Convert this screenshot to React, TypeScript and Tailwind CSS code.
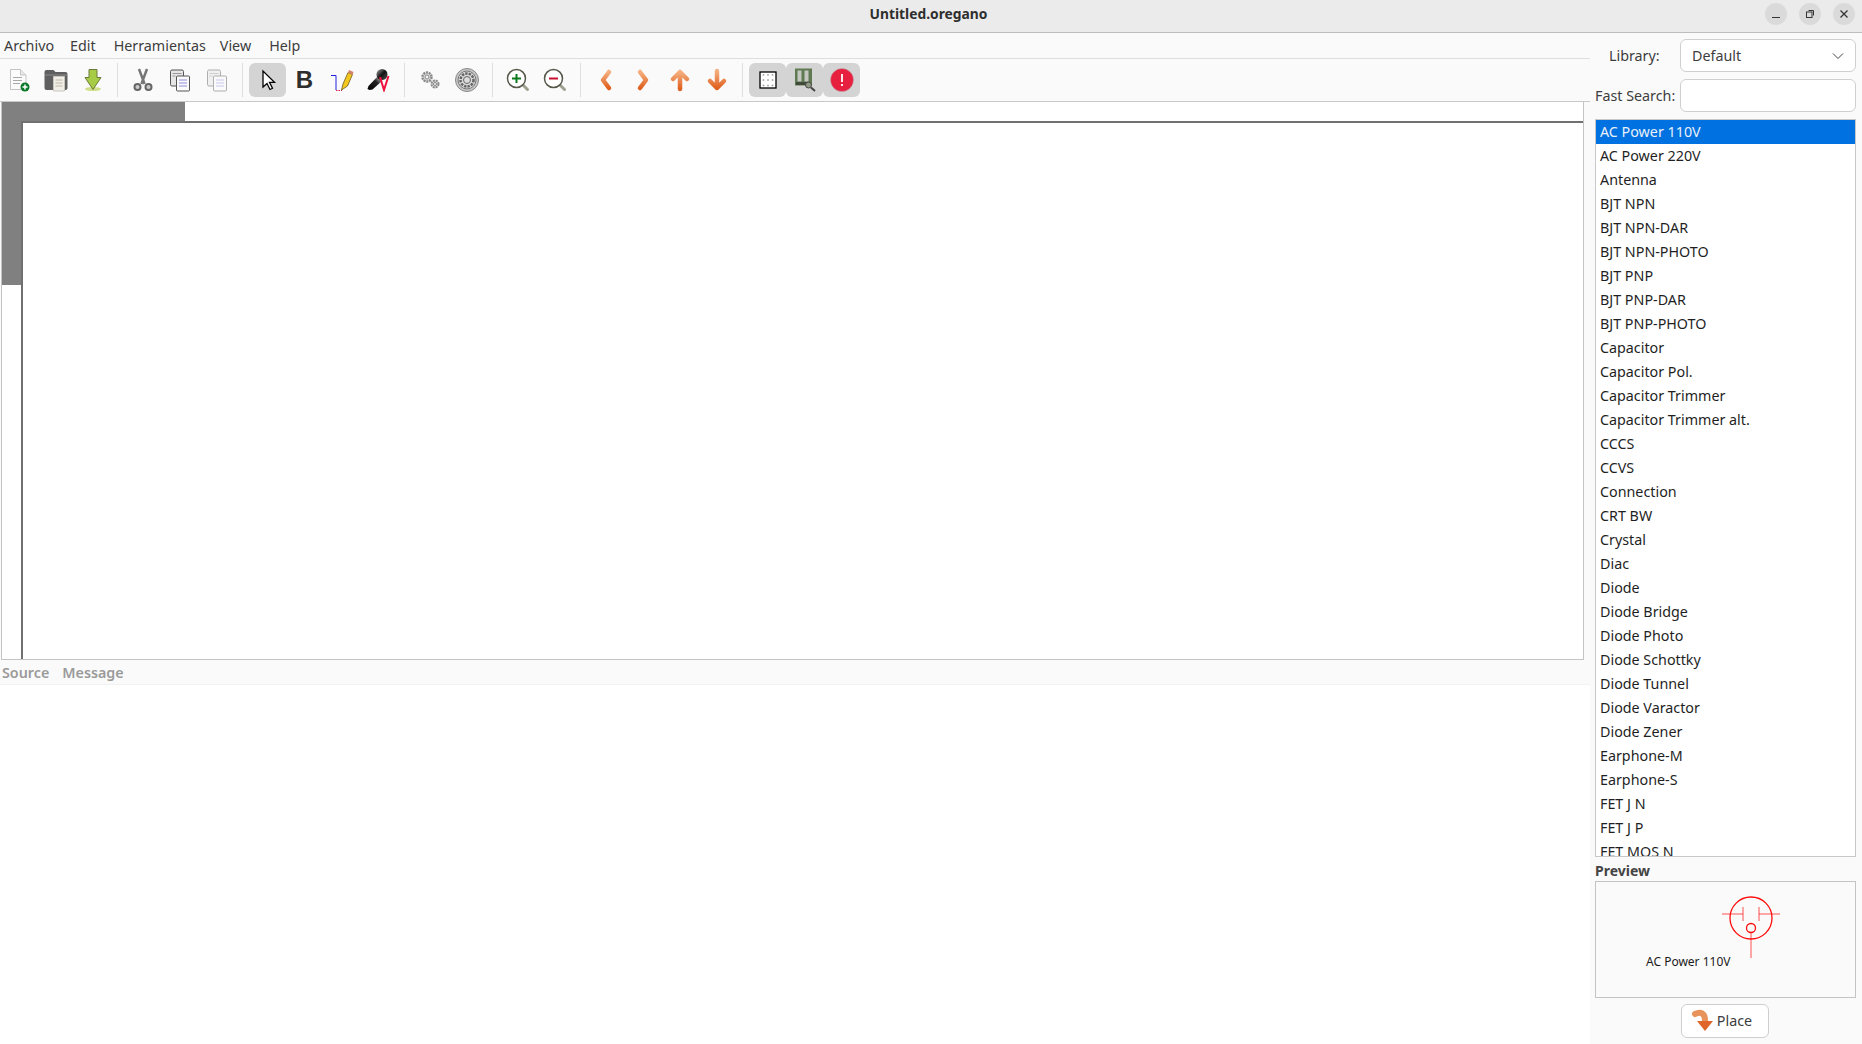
import { ReactNode } from 'react';

const parts = [
  'AC Power 110V', 'AC Power 220V', 'Antenna', 'BJT NPN', 'BJT NPN-DAR', 'BJT NPN-PHOTO', 'BJT PNP', 'BJT PNP-DAR',
  'BJT PNP-PHOTO', 'Capacitor', 'Capacitor Pol.', 'Capacitor Trimmer', 'Capacitor Trimmer alt.', 'CCCS', 'CCVS',
  'Connection', 'CRT BW', 'Crystal', 'Diac', 'Diode', 'Diode Bridge', 'Diode Photo', 'Diode Schottky', 'Diode Tunnel',
  'Diode Varactor', 'Diode Zener', 'Earphone-M', 'Earphone-S', 'FET J N', 'FET J P', 'FET MOS N',
];

function Svg({ children }: { children: ReactNode }) {
  return <svg width="24" height="24" viewBox="0 0 24 24" fill="none">{children}</svg>;
}

function Tool({ active, children }: { active?: boolean; children: ReactNode }) {
  return (
    <div className={`w-[37px] h-[34px] flex items-center justify-center rounded-md ${active ? 'bg-[#d4d4d4]' : ''}`}>
      {children}
    </div>
  );
}

function Sep({ narrow }: { narrow?: boolean }) {
  return (
    <div className={`h-[34px] flex justify-center ${narrow ? 'w-[13px]' : 'w-[14px]'}`}>
      <div className="w-px h-full bg-[#dedede]" />
    </div>
  );
}

const NewIcon = () => (
  <Svg>
    <path d="M3.5 1.5h10l5.500 5.500v14.500h-15.500z" fill="#fbfbfb" stroke="#c4c4c4" />
    <path d="M13.500 1.500v5.500h5.500" fill="#e8e8e8" stroke="#c4c4c4" />
    <path d="M6 9.500h9M6 12.500h9M6 15.500h7" stroke="#a8a8a8" />
    <circle cx="18" cy="19" r="4.500" fill="#0b7a2b" />
    <path d="M15.500 19h5M18 16.500v5" stroke="#fff" strokeWidth="1.500" />
  </Svg>
);

const OpenIcon = () => (
  <Svg>
    <path d="M0.500 4a2 2 0 0 1 2-2h7l2 2h10a2 2 0 0 1 2 2v14a2 2 0 0 1-2 2h-19a2 2 0 0 1-2-2z" fill="#5f5f5f" />
    <path d="M1 7h22" stroke="#8a8a8a" />
    <path d="M9.500 8.500h11v14.500h-11z" fill="#f0eee6" stroke="#c8c6bc" />
    <path d="M11.500 12h7M11.500 15h7M11.500 18h7" stroke="#bdb9a8" />
  </Svg>
);

const SaveIcon = () => (
  <Svg>
    <ellipse cx="12" cy="21" rx="8" ry="2" fill="#cfe08a" />
    <path d="M8 1.500h8v8h4l-8 12-8-12h4z" fill="#a6cc45" stroke="#6b7a3a" />
  </Svg>
);

const CutIcon = () => (
  <Svg>
    <path d="M8 1l4.500 12 1 3M16 1l-4.500 12-1 3" stroke="#777" strokeWidth="2.500" />
    <circle cx="6.500" cy="19" r="3" stroke="#666" strokeWidth="2" fill="#ccc" />
    <circle cx="17.500" cy="19" r="3" stroke="#666" strokeWidth="2" fill="#ccc" />
  </Svg>
);

const CopyIcon = ({ faded }: { faded?: boolean }) => (
  <g opacity={faded ? 0.45 : 1}>
    <rect x="2.500" y="2" width="13" height="16" rx="1.500" fill="#e6e6e6" stroke="#555" />
    <rect x="8.500" y="8" width="13" height="15" rx="1" fill="#fafafa" stroke="#555" />
    <path d="M4.500 5.500h9M4.500 8h3" stroke="#999" />
    <path d="M11 12h8M11 15h8M11 18h8" stroke="#8c8cdc" />
  </g>
);

const PointerIcon = () => (
  <Svg>
    <path d="M7 3v16l4-3.500 3 6 2.500-1.200-3-6h5z" fill="#fff" stroke="#000" strokeWidth="1.300" />
  </Svg>
);

const WireIcon = () => (
  <Svg>
    <path d="M1 7.500h5v14.500" stroke="#2020e0" strokeWidth="1" />
    <path d="M6 22.500h6" stroke="#e02050" strokeWidth="1" strokeDasharray="1.500 1" />
    <path d="M11.500 22l1.500-6 5-11.500 4.500 2-5 11.500z" fill="#f2c81e" stroke="#6d5a20" strokeWidth="0.800" />
    <path d="M18 4.500l1-2.500 4.500 2-1 3z" fill="#d2826a" />
  </Svg>
);

const ProbeIcon = () => (
  <Svg>
    <defs>
      <linearGradient id="probe" x1="0" y1="0" x2="1" y2="1">
        <stop offset="0" stopColor="#aaa" />
        <stop offset="0.500" stopColor="#111" />
        <stop offset="1" stopColor="#555" />
      </linearGradient>
      <linearGradient id="handle" x1="0" y1="1" x2="1" y2="0">
        <stop offset="0" stopColor="#000" />
        <stop offset="0.600" stopColor="#222" />
        <stop offset="1" stopColor="#ddd" />
      </linearGradient>
    </defs>
    <path d="M0.500 21l1-3 9-9.500 4.500 4.500-9.500 8.500-3 .5z" fill="url(#handle)" />
    <circle cx="15" cy="6.500" r="5.500" fill="url(#probe)" />
    <path d="M13 9l4 13 4.500-14" stroke="#f0103c" strokeWidth="2" />
  </Svg>
);

const GearsIcon = () => (
  <Svg>
    <circle cx="9" cy="9" r="4.500" fill="#ddd" stroke="#8a8a8a" strokeWidth="2.500" strokeDasharray="2 0.800" />
    <circle cx="9" cy="9" r="2" fill="#f4f4f4" stroke="#888" />
    <circle cx="17" cy="16" r="3.500" fill="#ddd" stroke="#8a8a8a" strokeWidth="2" strokeDasharray="2 0.800" />
    <circle cx="17" cy="16" r="1.500" fill="#f4f4f4" stroke="#888" />
  </Svg>
);

const SettingsIcon = () => (
  <Svg>
    <circle cx="12" cy="12" r="11.500" fill="#c8c8c8" stroke="#888" />
    <circle cx="12" cy="12" r="9" fill="#dcdcdc" stroke="#777" />
    <circle cx="12" cy="12" r="6.500" stroke="#666" strokeWidth="2.500" strokeDasharray="2.500 1" />
    <circle cx="12" cy="12" r="3.500" fill="#dcdcdc" stroke="#666" />
  </Svg>
);

const ZoomIcon = ({ plus }: { plus?: boolean }) => (
  <Svg>
    <path d="M16 16l5.500 5.500" stroke="#a0a090" strokeWidth="3" strokeLinecap="round" />
    <circle cx="10.500" cy="10.500" r="9" fill="#fff" stroke="#55584a" strokeWidth="1.500" />
    <path d="M6 10.500h9" stroke={plus ? '#0b7a1e' : '#c8102e'} strokeWidth="2" />
    {plus && <path d="M10.500 6v9" stroke="#0b7a1e" strokeWidth="2" />}
  </Svg>
);

const ArrowIcon = ({ d, grad }: { d: string; grad: string }) => (
  <Svg>
    <defs>
      <linearGradient id={grad} x1="0" y1="0" x2="0" y2="1" gradientUnits="objectBoundingBox">
        <stop offset="0" stopColor="#f4b080" />
        <stop offset="1" stopColor="#e0601f" />
      </linearGradient>
    </defs>
    <path d={d} stroke={`url(#${grad})`} strokeWidth="4.500" strokeLinecap="round" strokeLinejoin="round" />
  </Svg>
);

const GridIcon = () => (
  <Svg>
    <rect x="4" y="4" width="16" height="16" fill="#fff" stroke="#000" strokeWidth="1.300" />
    <path d="M7.500 6v1.500M7.500 11v2M7.500 16.500v2M12 6v1.500M12 11v2M12 16.500v2M16.500 6v1.500M16.500 11v2M16.500 16.500v2M6.500 7h2M6.500 12h2M6.500 17.500h2M11 7h2M11 12h2M11 17.500h2M15.500 7h2M15.500 12h2M15.500 17.500h2" stroke="#a0a0a0" strokeWidth="0.800" />
  </Svg>
);

const BoardIcon = () => (
  <Svg>
    <rect x="2" y="0.500" width="17" height="17" fill="#5f7a52" />
    <rect x="4.500" y="2.500" width="4" height="11" fill="#c4c8c0" />
    <rect x="11.500" y="2.500" width="4" height="11" fill="#c4c8c0" />
    <path d="M3 17h13v-3H3z" fill="#3f4a3a" />
    <circle cx="15.500" cy="17" r="3" fill="#8f9a85" stroke="#444" />
    <path d="M18 19.500l4 3.500" stroke="#444" strokeWidth="2" />
  </Svg>
);

const AlertIcon = () => (
  <Svg>
    <circle cx="12" cy="12" r="11.500" fill="#e8203f" stroke="#b8b8b8" strokeWidth="0.500" />
    <path d="M12 6v8" stroke="#fff" strokeWidth="1.800" />
    <path d="M12 16v2" stroke="#fff" strokeWidth="1.800" />
  </Svg>
);

export default function App() {
  return (
    <div className="w-[1862px] h-[1044px] flex flex-col overflow-hidden bg-[#fafafa] font-['Noto_Sans',sans-serif] text-[14.3px] text-[#3d3d3d]">
      <header className="relative h-[33px] shrink-0 flex items-center justify-center pb-[4px] pr-[5px] bg-[#ebebeb] border-b border-[#bdbdbd]">
        <span className="font-bold text-[13.8px] text-[#2e2e2e]">Untitled.oregano</span>
        <div className="absolute right-[7px] top-[3px] flex gap-[12px]">
          <div className="w-[22px] h-[22px] rounded-full bg-[#dadada] flex items-center justify-center">
            <div className="w-[8px] h-px mt-[6px] bg-[#333]" />
          </div>
          <div className="w-[22px] h-[22px] rounded-full bg-[#dadada] flex items-center justify-center">
            <svg width="10" height="10" viewBox="0 0 10 10" fill="none" stroke="#333">
              <rect x="1.500" y="3" width="5.500" height="5.500" />
              <path d="M3.500 1.500h5v5" />
            </svg>
          </div>
          <div className="w-[22px] h-[22px] rounded-full bg-[#dadada] flex items-center justify-center">
            <svg width="10" height="10" viewBox="0 0 10 10" stroke="#333" strokeWidth="1.300">
              <path d="M1.500 1.500l7 7M8.500 1.500l-7 7" />
            </svg>
          </div>
        </div>
      </header>

      <div className="flex-1 flex min-h-0">
        <main className="w-[1590px] flex flex-col shrink-0">
          <nav className="h-[26px] flex items-center gap-[16px] pl-[4px] bg-[#fafafa] border-b border-[#dedede]">
            <span>Archivo</span>
            <span className="mr-[2px]">Edit</span>
            <span className="mr-[-2px]">Herramientas</span>
            <span className="mr-[2px]">View</span>
            <span>Help</span>
          </nav>

          <div className="h-[43px] flex items-center border-b border-[#c8c8c8] bg-[#fafafa]">
            <Tool><NewIcon /></Tool>
            <Tool><OpenIcon /></Tool>
            <Tool><SaveIcon /></Tool>
            <Sep narrow />
            <Tool><CutIcon /></Tool>
            <Tool><Svg><CopyIcon /></Svg></Tool>
            <Tool><Svg><CopyIcon faded /></Svg></Tool>
            <Sep />
            <Tool active><PointerIcon /></Tool>
            <Tool><span className="font-['Liberation_Sans',sans-serif] font-bold text-[24px] leading-none text-[#2e2e2e]">B</span></Tool>
            <Tool><WireIcon /></Tool>
            <Tool><ProbeIcon /></Tool>
            <Sep />
            <Tool><GearsIcon /></Tool>
            <Tool><SettingsIcon /></Tool>
            <Sep />
            <Tool><ZoomIcon plus /></Tool>
            <Tool><ZoomIcon /></Tool>
            <Sep />
            <Tool><ArrowIcon grad="a1" d="M15 4l-6 8 6 8" /></Tool>
            <Tool><ArrowIcon grad="a2" d="M9 4l6 8-6 8" /></Tool>
            <Tool><ArrowIcon grad="a3" d="M12 21V4M5 11l7-7 7 7" /></Tool>
            <Tool><ArrowIcon grad="a4" d="M12 3v17M5 13l7 7 7-7" /></Tool>
            <Sep />
            <Tool active><GridIcon /></Tool>
            <Tool active><BoardIcon /></Tool>
            <Tool active><AlertIcon /></Tool>
          </div>

          <div className="relative h-[558px] ml-px mr-[6px] bg-white border-l border-r border-b border-[#c4c4c4] overflow-hidden">
            <div className="absolute left-0 top-0 w-[183px] h-[183px] bg-[#808080]" />
            <div className="absolute left-[19px] top-[19px] right-0 bottom-0 bg-white border-l-2 border-t-2 border-[#707070]" />
          </div>

          <div className="h-[25px] pt-[1px] flex items-center gap-[13px] pl-[2px] font-semibold text-[#9a9a9a] bg-[#fafafa] border-b border-[#f2f2f2]">
            <span>Source</span>
            <span>Message</span>
          </div>
          <div className="flex-1 bg-white" />
        </main>

        <aside className="flex-1 flex flex-col bg-[#fafafa] pl-[5px] pr-[6px]">
          <div className="h-[33px] mt-[6px] flex items-center">
            <span className="w-[85px] pl-[14px]">Library:</span>
            <div className="flex-1 h-full flex items-center justify-between pl-[11px] pr-[11px] bg-white border border-[#cfcfcf] rounded-md">
              <span>Default</span>
              <svg width="12" height="8" viewBox="0 0 12 8" fill="none" stroke="#444" strokeWidth="1">
                <path d="M1 1.500l5 5 5-5" />
              </svg>
            </div>
          </div>
          <div className="h-[33px] mt-[7px] flex items-center">
            <span className="w-[85px] whitespace-nowrap">Fast Search:</span>
            <div className="flex-1 h-full bg-white border border-[#cfcfcf] rounded-md" />
          </div>
          <ul className="h-[738px] mt-[7px] overflow-hidden bg-white border border-[#c8c8c8] text-[#1f1f1f]">
            {parts.map((name, i) => (
              <li key={name} className={`h-[24px] leading-[24px] pl-[4px] whitespace-nowrap ${i === 0 ? 'bg-[#0071e0] text-[#e8f0fa]' : ''}`}>
                {name}
              </li>
            ))}
          </ul>
          <div className="h-[24px] pt-[3px] flex items-center font-bold text-[14px] text-[#444]">Preview</div>
          <div className="relative h-[117px] bg-[#fafafa] border border-[#c4c4c4]">
            <svg className="absolute left-[125px] top-[14px]" width="60" height="62" viewBox="0 0 60 62" fill="none" stroke="#ff0a0a">
              <circle cx="30" cy="22" r="21" strokeWidth="1.300" />
              <path d="M1 18h21M22 11v14M38 11v14M38 18h21" opacity="0.700" />
              <circle cx="30" cy="32" r="4.500" strokeWidth="1.300" />
              <path d="M30 37v25" opacity="0.700" />
            </svg>
            <span className="absolute left-[50px] top-[71px] text-[12px] text-[#1a1a1a] whitespace-nowrap">AC Power 110V</span>
          </div>
          <div className="mt-[6px] flex justify-center">
            <div className="w-[88px] h-[34px] ml-[-2px] pr-[5px] flex items-center justify-center gap-[3px] bg-white border border-[#cfcfcf] rounded-md">
              <svg width="22" height="24" viewBox="0 0 22 24" fill="none">
                <path d="M3 5c6-3 10 0 10 6v3" stroke="#e8935a" strokeWidth="6" strokeLinecap="round" />
                <path d="M5 12h16l-8 10z" fill="#e0652a" />
              </svg>
              <span>Place</span>
            </div>
          </div>
        </aside>
      </div>
    </div>
  );
}
